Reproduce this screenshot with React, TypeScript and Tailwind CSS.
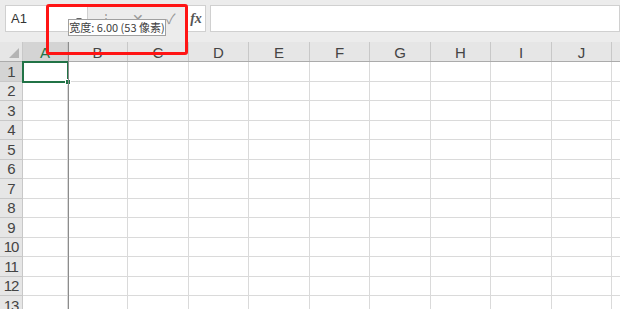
const COLS = [
  { name: 'A', w: 45 },
  { name: 'B', w: 60 },
  { name: 'C', w: 61 },
  { name: 'D', w: 60 },
  { name: 'E', w: 61 },
  { name: 'F', w: 60 },
  { name: 'G', w: 61 },
  { name: 'H', w: 60 },
  { name: 'I', w: 61 },
  { name: 'J', w: 60 },
  { name: '', w: 60 },
]

const ROWS = [20, 19, 20, 19, 20, 19, 20, 19, 20, 19, 20, 19, 20]

function Toolbar() {
  return (
    <div className="flex h-[42px] items-start bg-[#ececec] pt-[5px]">
      {/* name box */}
      <div className="ml-[5px] flex h-[27px] w-[83px] items-center justify-between border border-[#d0d0d0] bg-white pl-[5px] pr-[4px]">
        <span className="text-[13px] text-[#333]">A1</span>
        <svg width="8" height="8" viewBox="0 0 8 8">
          <path d="M1 3 L4 6 L7 3 Z" fill="#666" />
        </svg>
      </div>
      {/* buttons */}
      <div className="flex h-[27px] w-[98px] items-center text-[#999]">
        <span className="ml-[12px] text-[12px] leading-none">⋮</span>
        <span className="ml-[20px] text-[14px] leading-none">✕</span>
        <span className="ml-[22px] text-[14px] leading-none">✓</span>
      </div>
      <div className="flex h-[27px] w-[20px] items-center justify-center border border-[#d0d0d0] bg-white">
        <span className="font-['Liberation_Serif'] text-[14px] font-bold italic text-[#555]">fx</span>
      </div>
      <div className="ml-[4px] h-[27px] flex-1 border border-[#d0d0d0] bg-white" />
    </div>
  )
}

function HeaderRow() {
  return (
    <div className="flex h-[20px] border-b border-[#ababab] bg-[#e6e6e6]">
      <div className="relative w-[23px] shrink-0 border-r border-[#c8c8c8]">
        <svg className="absolute bottom-[3px] right-[3px]" width="10" height="10" viewBox="0 0 10 10">
          <path d="M10 0 L10 10 L0 10 Z" fill="#b4b4b4" />
        </svg>
      </div>
      {COLS.map((c, i) => (
        <div
          key={i}
          style={{ width: c.w }}
          className={
            i === 0
              ? 'flex shrink-0 items-end justify-center border-r border-[#c8c8c8] bg-[#d4d4d4] pb-[1px] text-[15px] leading-none text-[#217346]'
              : 'flex shrink-0 items-end justify-center border-r border-[#c8c8c8] pb-[1px] text-[15px] leading-none text-[#444]'
          }
        >
          {c.name}
        </div>
      ))}
    </div>
  )
}

function Row({ n, h }: { n: number; h: number }) {
  return (
    <div className="flex" style={{ height: h }}>
      <div
        className={
          n === 1
            ? 'flex w-[23px] shrink-0 items-end justify-center border-b border-r border-[#c8c8c8] bg-[#d4d4d4] text-[15px] leading-[18px] tracking-[-1px] text-[#444]'
            : 'flex w-[23px] shrink-0 items-end justify-center border-b border-r border-[#c8c8c8] bg-[#e6e6e6] text-[15px] leading-[18px] tracking-[-1px] text-[#444]'
        }
      >
        {n}
      </div>
      {COLS.map((c, i) => (
        <div
          key={i}
          style={{ width: c.w }}
          className="shrink-0 border-b border-r border-[#dadada] bg-white"
        />
      ))}
    </div>
  )
}

export default function App() {
  return (
    <div className="relative h-[309px] w-[620px] overflow-hidden bg-white font-['Liberation_Sans','Noto_Sans_CJK_SC',sans-serif]">
      <Toolbar />
      <HeaderRow />
      {ROWS.map((h, i) => (
        <Row key={i} n={i + 1} h={h} />
      ))}

      {/* selected cell A1 */}
      <div className="absolute left-[22px] top-[61px] h-[22px] w-[47px] border-2 border-[#217346]" />
      <div className="absolute left-[65px] top-[79px] h-[6px] w-[6px] border border-white bg-[#217346]" />

      {/* column resize guide */}
      <div className="absolute left-[68px] top-[42px] h-[267px] w-px bg-[#8c8c8c]" />

      {/* width tooltip */}
      <div className="absolute left-[68px] top-[19px] flex h-[17px] w-[98px] items-center justify-center whitespace-nowrap border border-[#a0a0a0] bg-white font-['Noto_Sans_CJK_SC',sans-serif] text-[11px] leading-none text-[#404040]">
        宽度: 6.00 (53 像素)
      </div>

      {/* red annotation box */}
      <div className="absolute left-[46px] top-[4px] h-[51px] w-[142px] rounded-[3px] border-[3px] border-[#ff1414]" />
    </div>
  )
}
